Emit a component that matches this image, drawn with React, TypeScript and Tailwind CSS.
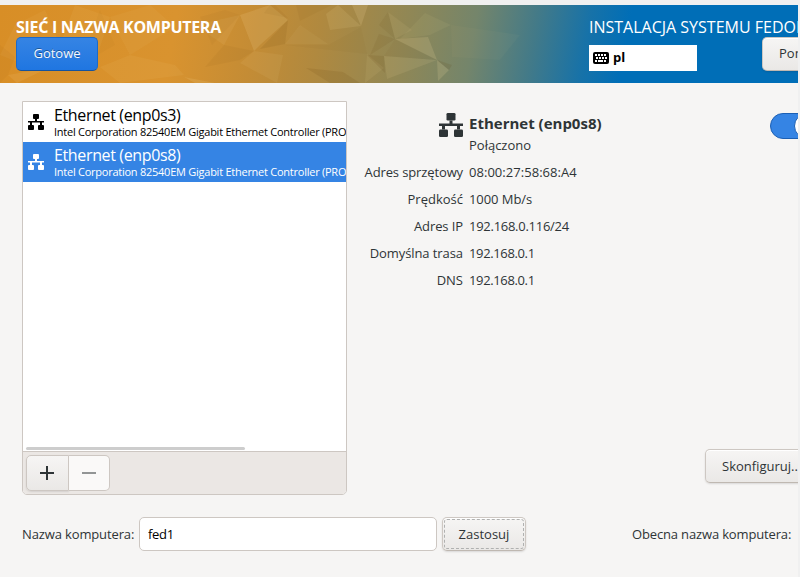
import React from "react";

function NetworkIcon({ className }: { className: string }) {
  return (
    <svg viewBox="0 0 16 16" className={className} fill="currentColor" aria-hidden="true">
      <rect x="5" y="0" width="6" height="5" rx="0.9" />
      <path d="M7 5h2v2h7v1.6H14V11h-2V8.6H4V11H2V8.6H0V7h7z" />
      <rect x="0" y="11" width="6" height="5" rx="0.9" />
      <rect x="10" y="11" width="6" height="5" rx="0.9" />
    </svg>
  );
}

function KeyboardIcon() {
  return (
    <svg viewBox="0 0 16 12" className="h-3 w-4 shrink-0" aria-hidden="true">
      <rect width="16" height="12" rx="2" fill="#000" />
      <path
        fill="#fff"
        d="M2 2h2v2H2zM5 2h2v2H5zM8 2h2v2H8zM11 2h2v2h-2zM3 5h2v2H3zM6 5h2v2H6zM9 5h2v2H9zM12 5h2v2h-2zM2 8h2v2H2zM5 8h5v2H5zM11 8h2v2h-2z"
      />
    </svg>
  );
}

const light: [string, number][] = [
  ["17,78 48,63 8,70", 0.1],
  ["0,50 15,20 45,5 60,40 30,62", 0.05],
  ["75,0 110,12 98,48 60,40", 0.06],
  ["110,12 150,0 175,22 130,50", 0.05],
  ["130,50 175,60 184,70 120,78 100,62", 0.06],
  ["184,72 215,78 195,78", 0.12],
  ["195,20 240,10 224,40", 0.08],
  ["240,10 270,0 288,15 260,40 254,46", 0.13],
  ["254,46 283,50 277,78 240,58", 0.07],
  ["285,39 300,20 328,39", 0.05],
  ["326,9 338,0 361,21 330,25", 0.11],
  ["352,0 368,0 361,21", 0.15],
  ["388,7 412,25 395,34", 0.08],
  ["395,34 428,32 437,55", 0.15],
  ["384,51 437,55 387,74", 0.1],
  ["437,55 449,65 438,76", 0.15],
  ["367,49 384,63 365,78", 0.08],
  ["425,8 451,20 430,30 400,34", 0.06],
  ["451,20 520,30 500,55 452,52", 0.03],
];

const dark: [string, number][] = [
  ["0,78 0,40 15,52 8,70", 0.04],
  ["100,5 115,40 80,60", 0.03],
  ["224,40 254,46 240,55 205,62", 0.05],
  ["200,12 225,5 240,10 212,40", 0.04],
  ["270,0 275,0 288,13 264,8", 0.05],
  ["288,15 285,39 260,44", 0.09],
  ["296,0 332,0 300,16", 0.05],
  ["285,40 328,40 361,22 367,49", 0.03],
  ["306,63 343,67 360,78 330,78", 0.1],
  ["367,50 384,51 385,68", 0.1],
  ["379,29 395,34 370,50", 0.08],
  ["388,7 395,34 379,20", 0.07],
  ["437,55 452,60 449,65", 0.1],
  ["395,34 437,55 384,51", 0.04],
];

function HeaderTexture() {
  return (
    <svg viewBox="0 0 798 78" className="absolute inset-0 h-[78px] w-[798px]" aria-hidden="true">
      {light.map(([points, opacity]) => (
        <polygon key={points} points={points} fill="#ffe6a8" opacity={opacity} />
      ))}
      {dark.map(([points, opacity]) => (
        <polygon key={points} points={points} fill="#5a3500" opacity={opacity} />
      ))}
    </svg>
  );
}

const buttonBase =
  "flex h-[34px] shrink-0 items-center rounded-[5px] border border-[#cdc7c2] border-b-[#bfb8b1] bg-linear-to-b from-[#f6f5f4] to-[#eae8e6] shadow-[0_1px_2px_rgba(0,0,0,0.12),inset_0_1px_#fff]";

const devices = [
  { name: "Ethernet (enp0s3)", selected: false },
  { name: "Ethernet (enp0s8)", selected: true },
];

const details = [
  { label: "Adres sprzętowy", value: "08:00:27:58:68:A4", l: "tracking-[-0.12px]", v: "tracking-[0.04px]" },
  { label: "Prędkość", value: "1000 Mb/s", l: "", v: "tracking-[-0.06px]" },
  { label: "Adres IP", value: "192.168.0.116/24", l: "tracking-[-0.1px]", v: "tracking-[-0.27px]" },
  { label: "Domyślna trasa", value: "192.168.0.1", l: "tracking-[-0.08px]", v: "tracking-[-0.36px]" },
  { label: "DNS", value: "192.168.0.1", l: "", v: "tracking-[-0.36px]" },
];

export default function App() {
  return (
    <div className="h-[577px] w-[800px] overflow-hidden bg-[#f0f0f0] pt-[5px] font-['Open_Sans','Noto_Sans',sans-serif] text-[13px] text-[#2e3436]">
      <div className="flex h-[572px] w-[798px] flex-col overflow-hidden whitespace-nowrap bg-[#f6f5f4]">
        <header className="relative h-[78px] shrink-0 bg-[linear-gradient(100deg,#d88e26_0%,#d9932f_22%,#c48c35_32%,#b0893f_40%,#8f8756_51%,#74856b_59%,#437a88_66.5%,#1772a8_73%,#006eb7_78%)]">
          <HeaderTexture />
          <div className="relative flex h-full items-start pl-4">
            <div className="w-[573px] shrink-0 pt-3">
              <h1 className="h-5 text-[16px] leading-[20px] font-bold tracking-[-0.29px] text-white">SIEĆ I NAZWA KOMPUTERA</h1>
              <button className="flex h-[34px] w-[82px] items-center justify-center rounded-[5px] border border-[#1b6acb] border-b-[#15539e] bg-linear-to-b from-[#3584e4] to-[#1f76e1] text-[#f4f8fd] [text-shadow:0_-1px_rgba(0,0,0,0.35)]">
                Gotowe
              </button>
            </div>
            <div className="shrink-0 pt-3">
              <div className="h-5 text-[16px] leading-[20px] text-white">INSTALACJA SYSTEMU FEDORA</div>
              <div className="flex items-start">
                <div className="mt-2 flex h-[26px] w-[108px] items-center gap-1 bg-white pl-1 font-bold text-black">
                  <KeyboardIcon />
                  <span>pl</span>
                </div>
                <button className={`${buttonBase} ml-[65px] w-[80px] pl-4`}>Pomoc!</button>
              </div>
            </div>
          </div>
        </header>

        <main className="flex h-[412px] shrink-0 items-start pt-[18px] pl-[22px]">
          <section className="flex h-[394px] w-[325px] shrink-0 flex-col overflow-hidden rounded-b-[5px] border border-[#cdc7c2] bg-white">
            {devices.map((d) => (
              <div
                key={d.name}
                className={`flex h-10 shrink-0 items-center pl-[5px] ${d.selected ? "bg-[#3584e4] text-white" : "text-black"}`}
              >
                <NetworkIcon className="h-4 w-4 shrink-0" />
                <div className="ml-[10px] flex flex-col">
                  <span className="h-[18px] text-[16px] leading-[18px] tracking-[-0.36px]">{d.name}</span>
                  <span className="h-[15px] text-[11px] leading-[15px] tracking-[-0.25px]">
                    Intel Corporation 82540EM Gigabit Ethernet Controller (PRO/1000 MT)
                  </span>
                </div>
              </div>
            ))}
            <div className="flex flex-1 flex-col justify-end pb-px pl-[3px]">
              <div className="h-[3px] w-[219px] rounded-full bg-[#cdcdcd]" />
            </div>
            <div className="flex h-[43px] shrink-0 items-start border-t border-[#cdc7c2] bg-[#ebe7e4] pt-[3px] pl-[3px]">
              <button className="flex h-9 w-[43px] items-center justify-center rounded-l-[5px] border border-[#cdc7c2] bg-linear-to-b from-[#f6f5f4] to-[#eae8e6] pr-px shadow-[0_1px_2px_rgba(0,0,0,0.1)]">
                <svg viewBox="0 0 14 14" className="h-[14px] w-[14px]" fill="#2e3436">
                  <path d="M6 0h2v6h6v2H8v6H6V8H0V6h6z" />
                </svg>
              </button>
              <button className="flex h-9 w-[41px] items-center justify-center rounded-r-[5px] border border-l-0 border-[#cdc7c2] bg-[#faf9f8]">
                <span className="h-[2px] w-[14px] bg-[#929595]" />
              </button>
            </div>
          </section>

          <section className="flex w-[451px] shrink-0 flex-col self-stretch">
            <div className="flex items-start pt-[7px]">
              <NetworkIcon className="mt-[5px] ml-[92px] h-6 w-6 shrink-0" />
              <div className="ml-[6px] w-[301px] shrink-0">
                <h2 className="h-[31px] text-[15px] leading-[30px] font-bold">Ethernet (enp0s8)</h2>
                <div className="h-[13px] leading-[13px]">Połączono</div>
              </div>
              <div className="mt-[5px] h-[26px] w-[49px] shrink-0 rounded-full border border-[#1b5fb4] bg-[#3584e4]">
                <div className="-mt-px ml-[23px] h-[26px] w-[26px] rounded-full border border-[#1b5fb4] bg-white" />
              </div>
            </div>
            <dl className="mt-[7px]">
              {details.map((d) => (
                <div key={d.label} className="flex h-[27px] items-center gap-[6px]">
                  <dt className={`w-[116px] shrink-0 text-right ${d.l}`}>{d.label}</dt>
                  <dd className={d.v}>{d.value}</dd>
                </div>
              ))}
            </dl>
            <div className="mt-auto pb-3 pl-[358px]">
              <button className={`${buttonBase} w-[120px] pt-px pl-4`}>Skonfiguruj...</button>
            </div>
          </section>
        </main>

        <footer className="mt-[22px] flex h-[34px] shrink-0 items-center pl-[22px]">
          <label htmlFor="host" className="w-[117px] shrink-0 pt-px tracking-[-0.13px]">Nazwa komputera:</label>
          <input
            id="host"
            defaultValue="fed1"
            className="h-[34px] w-[298px] shrink-0 rounded-[5px] border border-[#cdc7c2] bg-white px-2 tracking-[-0.3px] text-black outline-none"
          />
          <button className={`${buttonBase} ml-[5px] w-[84px] p-px`}>
            <span className="flex h-full w-full items-center justify-center rounded-[3px] border border-dashed border-[#b0b1b0] pt-px">Zastosuj</span>
          </button>
          <span className="ml-[106px] pt-px tracking-[-0.15px]">Obecna nazwa komputera:</span>
        </footer>
      </div>
    </div>
  );
}
